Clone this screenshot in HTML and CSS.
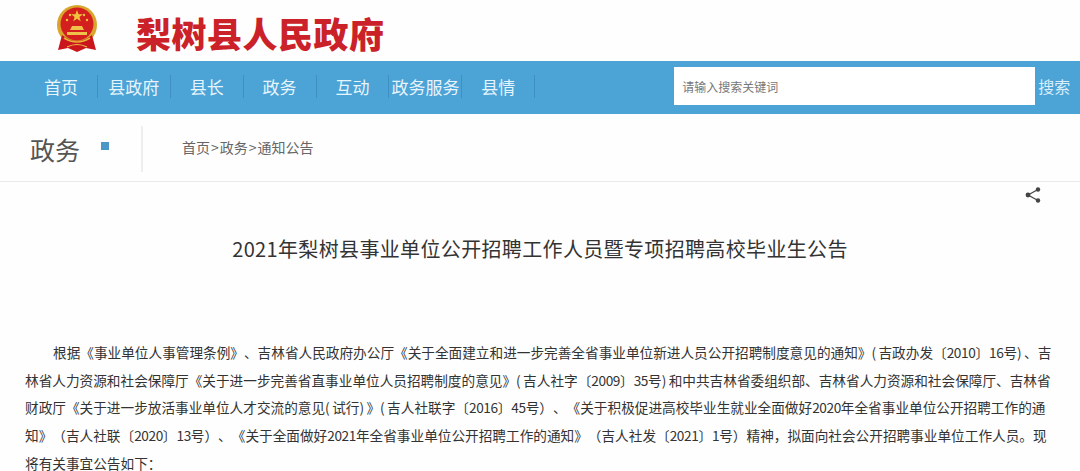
FILE: index.html
```html
<!DOCTYPE html>
<html lang="zh-CN">
<head>
    <meta charset="UTF-8">
    <title>梨树县人民政府</title>
    <link rel="stylesheet" href="styles.css">
</head>
<body>
    <header class="site-head">
        <svg class="emblem" viewBox="0 0 42 48" width="42" height="48">
            <circle cx="21" cy="20" r="20" fill="#d9a52c"/>
            <circle cx="21" cy="19" r="16.5" fill="#d3201f"/>
            <path d="M6 30 L2 45 L12 43 L21 47 L30 43 L40 45 L36 30 Q21 42 6 30 Z" fill="#c9151b"/>
            <path d="M21 5 l1.5 4.2 4.4 .1 -3.5 2.7 1.3 4.2 -3.7 -2.5 -3.7 2.5 1.3 -4.2 -3.5 -2.7 4.4 -.1 Z" fill="#f2c33c"/>
            <circle cx="11" cy="15" r="1.2" fill="#f2c33c"/>
            <circle cx="14" cy="10" r="1.2" fill="#f2c33c"/>
            <circle cx="28" cy="10" r="1.2" fill="#f2c33c"/>
            <circle cx="31" cy="15" r="1.2" fill="#f2c33c"/>
            <path d="M14 25 h14 l-2 -4 h-10 Z M11 30 h20 v-3 h-20 Z" fill="#efc04a"/>
            <path d="M8 33 q13 8 26 0" fill="none" stroke="#e9b23a" stroke-width="1.6"/>
            <path d="M11 42 q10 -5 20 0" fill="none" stroke="#efc04a" stroke-width="1.1"/>
        </svg>
        <div class="site-name">梨树县人民政府</div>
    </header>

    <nav class="main-nav">
        <ul class="nav-list">
            <li>首页</li>
            <li>县政府</li>
            <li>县长</li>
            <li>政务</li>
            <li>互动</li>
            <li>政务服务</li>
            <li>县情</li>
        </ul>
        <div class="search">
            <input class="search-input" type="text" placeholder="请输入搜索关键词">
            <span class="search-btn">搜索</span>
        </div>
    </nav>

    <div class="sub-bar">
        <div class="section-name">政务<span class="square"></span></div>
        <div class="crumbs">首页<i>&gt;</i>政务<i>&gt;</i>通知公告</div>
    </div>

    <main class="article">
        <div class="share-row">
            <svg viewBox="0 0 16 16" width="16" height="16">
                <path d="M13 2.5 L3 8 L13 13.5" fill="none" stroke="#444" stroke-width="1.2"/>
                <circle cx="13" cy="2.5" r="2.2" fill="#444"/>
                <circle cx="3" cy="8" r="2.4" fill="#444"/>
                <circle cx="13" cy="13.5" r="2.2" fill="#444"/>
            </svg>
        </div>
        <h1 class="article-title">2021年梨树县事业单位公开招聘工作人员暨专项招聘高校毕业生公告</h1>
        <p class="article-text">根据《事业单位人事管理条例》、吉林省人民政府办公厅《关于全面建立和进一步完善全省事业单位新进人员公开招聘制度意见的通知》<span class="hp">(</span>吉政办发〔<span class="num">2010</span>〕<span class="num">16</span>号<span class="hp">)</span>、吉<br>林省人力资源和社会保障厅《关于进一步完善省直事业单位人员招聘制度的意见》<span class="hp">(</span>吉人社字〔<span class="num">2009</span>〕<span class="num">35</span>号<span class="hp">)</span>和中共吉林省委组织部、吉林省人力资源和社会保障厅、吉林省<br>财政厅《关于进一步放活事业单位人才交流的意见<span class="hp">(</span>试行<span class="hp">)</span>》<span class="hp">(</span>吉人社联字〔<span class="num">2016</span>〕<span class="num">45</span>号）、《关于积极促进高校毕业生就业全面做好<span class="num">2020</span>年全省事业单位公开招聘工作的通<br>知》（吉人社联〔<span class="num">2020</span>〕<span class="num">13</span>号）、《关于全面做好<span class="num">2021</span>年全省事业单位公开招聘工作的通知》（吉人社发〔<span class="num">2021</span>〕<span class="num">1</span>号）精神，拟面向社会公开招聘事业单位工作人员。现<br>将有关事宜公告如下：</p>
    </main>
</body>
</html>
```

FILE: styles.css
```css
* {
    box-sizing: border-box;
}

html, body {
    margin: 0;
    height: 471px;
    overflow: hidden;
}

body {
    background: #fefefe;
    font-family: "Noto Sans CJK SC", "Liberation Sans", sans-serif;
    color: #333;
}

.site-head {
    height: 61px;
    display: flex;
    align-items: flex-start;
    padding: 5px 0 0 56px;
}

.site-name {
    margin: 8px 0 0 38px;
    font-size: 35px;
    line-height: 40px;
    font-weight: 900;
    letter-spacing: .5px;
    color: #cb2229;
    white-space: nowrap;
}

.main-nav {
    height: 53px;
    background: #4ba3d6;
    display: flex;
    align-items: flex-start;
    padding: 6px 0 0 25px;
}

.nav-list {
    list-style: none;
    margin: 8px 0 0;
    padding: 0;
    display: flex;
}

.nav-list li {
    width: 72.9px;
    height: 23px;
    line-height: 23px;
    text-align: center;
    font-size: 17px;
    color: #e6f4fc;
    border-right: 1px solid #3f8fc0;
    white-space: nowrap;
}

.search {
    display: flex;
    align-items: center;
    margin-left: 139px;
}

.search-input {
    width: 361px;
    height: 38px;
    border: none;
    outline: none;
    background: #fff;
    padding: 0 8px;
    font-family: inherit;
    font-size: 12px;
}

.search-input::placeholder {
    color: #777;
}

.search-btn {
    margin-left: 3px;
    font-size: 16px;
    color: #d9eefa;
}

.sub-bar {
    height: 68px;
    display: flex;
    align-items: flex-start;
    border-bottom: 1px solid #eaeaea;
}

.section-name {
    width: 143px;
    height: 46px;
    margin-top: 12px;
    padding-left: 30px;
    display: flex;
    align-items: center;
    font-size: 25px;
    color: #555;
    border-right: 2px solid #eee;
}

.square {
    width: 8px;
    height: 8px;
    margin: -6px 0 0 21px;
    background: #4b98c6;
}

.crumbs {
    margin: 23px 0 0 39px;
    font-size: 14px;
    color: #666;
    white-space: nowrap;
}

.crumbs i {
    font-style: normal;
    margin: 0 1px;
}

.article {
    padding: 0 25px;
}

.share-row {
    display: flex;
    justify-content: flex-end;
    padding: 5px 14px 0 0;
    height: 36px;
}

.article-title {
    margin: 17px 0 0;
    font-size: 20px;
    line-height: 28px;
    font-weight: 400;
    letter-spacing: .35px;
    text-align: center;
    color: #333;
}

.article-text {
    margin: 76px 0 0;
    font-size: 13.65px;
    line-height: 27.7px;
    text-indent: 28px;
    text-spacing-trim: space-all;
    white-space: nowrap;
    color: #333;
}

.article-text .num {
    letter-spacing: -.4px;
}

.article-text .hp {
    letter-spacing: 2.4px;
}
```
